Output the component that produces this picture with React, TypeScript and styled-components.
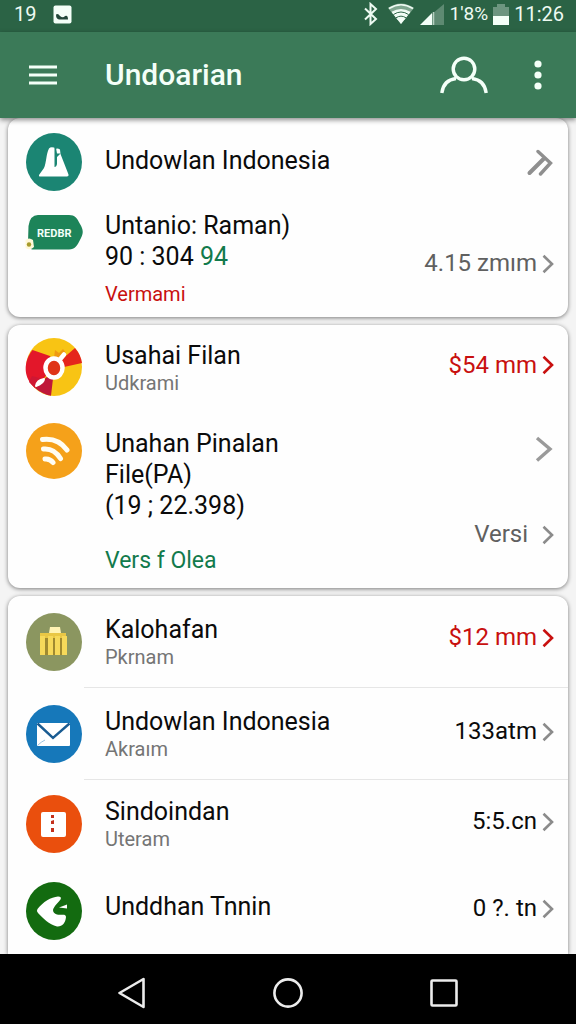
import React from "react";
import styled, { createGlobalStyle } from "styled-components";

const GlobalStyle = createGlobalStyle`
  * { box-sizing: border-box; }
  body {
    margin: 0;
    background: #f4f4f4;
    color: #0b0b0b;
    font-family: Roboto, "Liberation Sans", sans-serif;
  }
`;

const Screen = styled.div`
  display: flex;
  flex-direction: column;
  min-height: 100vh;
`;

const StatusBar = styled.div`
  display: flex;
  align-items: center;
  height: 32px;
  padding: 0 12px 4px 14px;
  background: #2b6345;
  color: #eefaf2;
  font-size: 20px;
  line-height: 28px;
`;

const StatusGroup = styled.div<{ $gap: number }>`
  display: flex;
  align-items: center;
  gap: ${(p) => p.$gap}px;
`;

const StatusRight = styled(StatusGroup)`
  margin-left: auto;
`;

const Percent = styled.span`
  font-size: 19px;
`;

const AppBar = styled.header`
  position: relative;
  display: flex;
  align-items: center;
  height: 86px;
  padding: 0 14px 0 19px;
  background: #3b7a58;
  box-shadow: 0 2px 5px rgba(0, 0, 0, 0.45);
`;

const Title = styled.h1`
  flex: 1;
  margin: 0 0 0 38px;
  color: #f4fff8;
  font-size: 30px;
  font-weight: 500;
  line-height: 40px;
`;

const IconButton = styled.button`
  display: flex;
  align-items: center;
  justify-content: center;
  width: 48px;
  height: 48px;
  padding: 0;
  border: 0;
  background: none;
  color: #f4fff8;
`;

const AppBarActions = styled.div`
  display: flex;
  gap: 26px;
`;

const Content = styled.main`
  display: flex;
  flex: 1;
  flex-direction: column;
  gap: 8px;
  padding: 0 8px;
`;

const Card = styled.section<{ $edge?: "top" | "bottom" }>`
  flex: ${(p) => (p.$edge === "bottom" ? "1" : "none")};
  border-radius: ${(p) => (p.$edge === "bottom" ? "12px 12px 0 0" : "12px")};
  background: #fefefe;
  box-shadow: 0 1px 4px rgba(0, 0, 0, 0.5);
`;

const Row = styled.a<{ $height: number; $top?: number }>`
  display: flex;
  align-items: ${(p) => (p.$top === undefined ? "center" : "flex-start")};
  min-height: ${(p) => p.$height}px;
  padding: ${(p) => p.$top ?? 0}px 14px 0 18px;
  color: inherit;
  text-decoration: none;
`;

const Avatar = styled.svg`
  flex: none;
  width: 56px;
  overflow: visible;
`;

const Text = styled.div<{ $top?: number; $bottom?: number }>`
  flex: 1;
  min-width: 0;
  margin-left: 23px;
  padding-top: ${(p) => p.$top ?? 0}px;
  padding-bottom: ${(p) => p.$bottom ?? 0}px;
`;

const Name = styled.div`
  font-size: 25px;
  line-height: 31px;
`;

const Sub = styled.div`
  color: #757575;
  font-size: 20px;
  line-height: 24px;
`;

const Note = styled.div<{ $tone: "red" | "green"; $gap: number }>`
  margin-top: ${(p) => p.$gap}px;
  color: ${(p) => (p.$tone === "red" ? "#c8100f" : "#127a4c")};
  font-size: ${(p) => (p.$tone === "red" ? 20 : 23)}px;
  line-height: 24px;
`;

const Green = styled.span`
  color: #127a4c;
`;

const End = styled.div<{ $top?: number; $bottom?: number }>`
  display: flex;
  flex-direction: column;
  align-items: flex-end;
  gap: 55px;
  padding-top: ${(p) => p.$top ?? 0}px;
  padding-bottom: ${(p) => p.$bottom ?? 0}px;
`;

const Value = styled.div<{ $color: string; $gap?: number }>`
  display: flex;
  align-items: center;
  gap: ${(p) => p.$gap ?? 5}px;
  color: ${(p) => p.$color};
  font-size: 24px;
  line-height: 31px;
`;

const ChevronBox = styled.div`
  display: flex;
  align-items: center;
  height: 31px;
`;

const Divider = styled.hr`
  height: 1px;
  margin: 0 0 0 76px;
  border: 0;
  background: #e6e6e6;
`;

const NavBar = styled.nav`
  display: flex;
  align-items: center;
  justify-content: space-evenly;
  height: 70px;
  padding-top: 8px;
  background: #000;
`;

const Chevron = ({ color = "#8b8b8b" }: { color?: string }) => (
  <svg width="12" height="20" viewBox="0 0 12 20" fill="none" stroke={color} strokeWidth="2.6">
    <path d="M1.5 1.8 10 10 1.5 18.2" />
  </svg>
);

const BigChevron = () => (
  <svg width="20" height="28" viewBox="0 0 20 28" fill="none" stroke="#9a9a9a" strokeWidth="3.4">
    <path d="M3 3 16 14 3 25.5" />
  </svg>
);

const DoubleChevron = () => (
  <svg width="28" height="28" viewBox="0 0 28 28" fill="none" stroke="#8f8f8f" strokeWidth="3.4" strokeLinecap="round">
    <path d="M12 3.5 24.5 15 14.500 26" />
    <path d="M17.500 11 3.500 25" strokeWidth="4" />
  </svg>
);

const MountainIcon = () => (
  <Avatar height="58" viewBox="0 0 56 58">
    <ellipse cx="28" cy="29" rx="28" ry="29" fill="#1b8573" />
    <path d="M13 42 18 35C20.500 30 20 21 23 15.500Q24.500 13.500 28 14.500L29.500 16Q31.500 15 34 16.500L34.500 21 42.500 41.500Q43 43.500 41 43.500H14Q12.500 43.500 13 42Z" fill="#fff" />
    <path d="M28.500 15V34Q30.500 34 31 31L31 24 34.500 20.500 31 20.500 30 15Z" fill="#1b8573" />
  </Avatar>
);

const TagIcon = () => (
  <Avatar height="44" viewBox="0 0 56 44">
    <path d="M12 5H43C49 5 51 8 54 14 57.500 20 57.500 23 55 28 51 36 49 39.500 43 39.500H8C3 39.500 2 37 2 32L2.500 16Q4 5 12 5Z" fill="#1d8459" />
    <text x="11" y="27" fill="#f3fff8" fontSize="11" fontWeight="700">REDBR</text>
    <path d="M-.5 30Q3 27 7 30L8 37Q4 41-.5 38Z" fill="#fff8d8" />
    <circle cx="3" cy="34.500" r="2.200" fill="#a79a2a" />
  </Avatar>
);

const WheelIcon = () => (
  <Avatar height="58" viewBox="0 0 56 58">
    <ellipse cx="28" cy="29" rx="28" ry="29" fill="#f8c414" />
    <path d="M6.500 12 24 18 28 29 9 50C-3 40-3 24 6.500 12Z" fill="#e3172a" />
    <path d="M24 36 28 32 25 57.800Q16 56 9 50Z" fill="#bf1839" />
    <path d="M9 50 17 41 6 38 3 44Z" fill="#cf1733" />
    <path d="M34 23 49 10Q55 17 56 25L38 29Z" fill="#e5251c" />
    <path d="M29 12 33 15 37 11 40 15 33 20H28Z" fill="#ef9a12" />
    <ellipse cx="28" cy="30" rx="8.500" ry="9.500" fill="#df3517" stroke="#fff" strokeWidth="4.500" />
    <path d="M33.500 22 38 16.500" stroke="#fff" strokeWidth="4.500" strokeLinecap="round" />
    <path d="M10 48Q11 42 18 41 18 45 10 48Z" fill="#fff" stroke="#fff" strokeWidth="2" strokeLinejoin="round" />
  </Avatar>
);

const FeedIcon = () => (
  <Avatar height="56" viewBox="0 0 56 56">
    <circle cx="28" cy="28" r="28" fill="#f5a11a" />
    <g fill="none" stroke="#fffdf3" strokeWidth="5" strokeLinecap="round">
      <path d="M16.500 16.500Q32 14.500 41 27" />
      <path d="M17.500 26Q28 25 34.500 35.500" />
      <path d="M19 36Q24 35.500 27 39.500" />
    </g>
  </Avatar>
);

const BuildingIcon = () => (
  <Avatar height="58" viewBox="0 0 56 58">
    <ellipse cx="28" cy="29" rx="28" ry="29" fill="#8b9660" />
    <path d="M24 14H34L35 20H23Z" fill="#fff3b4" />
    <path d="M14 20H40V25H14Z" fill="#e9c745" />
    <path d="M14 23H19V42H14Z M22 23H27V42H22Z M29 23H34V42H29Z M36 23H41V42H36Z" fill="#f6d95a" />
    <path d="M19 25H22V42H19Z M27 25H29V42H27Z M34 25H36V42H34Z" fill="#a08a30" />
  </Avatar>
);

const MailIcon = () => (
  <Avatar height="58" viewBox="0 0 56 58">
    <ellipse cx="28" cy="29" rx="28" ry="29" fill="#1678ba" />
    <rect x="11" y="18" width="33" height="23" rx="1" fill="#fff" />
    <path d="M11.500 18.500 27 33 43.500 18.500" fill="none" stroke="#1a5c92" strokeWidth="2.400" />
    <path d="M12 40Q15 37 19 35" fill="none" stroke="#9cc3e0" strokeWidth="1" />
  </Avatar>
);

const TicketIcon = () => (
  <Avatar height="58" viewBox="0 0 56 58">
    <ellipse cx="28" cy="29" rx="28" ry="29" fill="#ea4f0d" />
    <rect x="15" y="17" width="25" height="25" rx="2" fill="#fff" />
    <path d="M25 20h3v3h-3z M25 26l3-1v4h-3z M25 33h3v4h-3z" fill="#c4301c" />
  </Avatar>
);

const LeafIcon = () => (
  <Avatar height="58" viewBox="0 0 56 58">
    <ellipse cx="28" cy="29" rx="28" ry="29" fill="#136b10" />
    <path d="M11.500 27C17 20 25 15 32 14.500Q36 14.500 34.500 17.500C32 21 28 24 27 28Q27 31 31 32.500C35 33.500 40 31 40 35C39.500 41 36 45 31 44.500C23 42.500 17 36 12 31Q10 29 11.500 27Z" fill="#fff" />
    <path d="M33 25.500 41 22.500V26.500Z" fill="#fff" />
  </Avatar>
);

const PictureIcon = () => (
  <svg width="19" height="19" viewBox="0 0 19 19">
    <rect x=".5" y=".5" width="18" height="18" rx="2" fill="#f4fff8" />
    <path d="M3 9.500Q5 8 7 11 10 13.500 12 11 15 9.500 15 14.500H6Q3 14 3 9.500Z" fill="#23483a" />
  </svg>
);

const BluetoothIcon = () => (
  <svg width="16" height="24" viewBox="0 0 16 24" fill="none" stroke="#eefaf2" strokeWidth="2">
    <path d="M2 6.500 13 17 7.500 22V2L13 7 2 17.500" />
  </svg>
);

const WifiIcon = () => (
  <svg width="26" height="22" viewBox="0 0 26 22">
    <path d="M0 5Q13-4 26 5L13 21Z" fill="#7fa68f" />
    <path d="M4 9.500Q13 4 22 9.500L13 21Z" fill="#f4fff8" />
    <path d="M1 5.500Q13-2 25 5.500M4 9.500Q13 4 22 9.500M7 13Q13 9.500 19 13M9 16Q13 13.500 17 16" fill="none" stroke="#eefaf2" strokeWidth="1.600" />
    <path d="M5.500 11.500Q13 6.500 20.500 11.500M8 14.800Q13 11.500 18 14.800" fill="none" stroke="#2b6345" strokeWidth="1" />
  </svg>
);

const SignalIcon = () => (
  <svg width="24" height="21" viewBox="0 0 24 21">
    <path d="M12 10 24 0V21H12Z" fill="#5e8a72" />
    <path d="M0 21 12 9V21Z" fill="#f4fff8" />
    <path d="M13.500 8V21" stroke="#b5cfc0" strokeWidth="1.500" />
  </svg>
);

const BatteryIcon = () => (
  <svg width="16" height="21" viewBox="0 0 16 21">
    <path d="M0 3H4V0H12V3H16V12H0Z" fill="#6d9580" />
    <path d="M0 12H16V21H0Z" fill="#f4fff8" />
  </svg>
);

export default function App() {
  return (
    <Screen>
      <GlobalStyle />
      <StatusBar>
        <StatusGroup $gap={17}>
          <span>19</span>
          <PictureIcon />
        </StatusGroup>
        <StatusRight $gap={6}>
          <StatusGroup $gap={9}>
            <BluetoothIcon />
            <WifiIcon />
          </StatusGroup>
          <SignalIcon />
          <StatusGroup $gap={5}>
            <Percent>1'8%</Percent>
            <BatteryIcon />
            <span>11:26</span>
          </StatusGroup>
        </StatusRight>
      </StatusBar>
      <AppBar>
        <IconButton aria-label="Menu">
          <svg width="28" height="20" viewBox="0 0 28 20" fill="none" stroke="currentColor" strokeWidth="3">
            <path d="M0 2H28M0 10H28M0 18H28" />
          </svg>
        </IconButton>
        <Title>Undoarian</Title>
        <AppBarActions>
          <IconButton aria-label="Account">
            <svg width="48" height="38" viewBox="0 0 48 38" fill="none" stroke="currentColor" strokeWidth="3.400">
              <circle cx="24" cy="13" r="10.800" />
              <path d="M1.800 37C3 28 8 23.500 16 22.500M32 22.500C40 23.500 45 28 46.200 37" />
            </svg>
          </IconButton>
          <IconButton aria-label="More options">
            <svg width="8" height="30" viewBox="0 0 8 30" fill="currentColor">
              <circle cx="4" cy="4" r="3.600" />
              <circle cx="4" cy="15" r="3.600" />
              <circle cx="4" cy="26" r="3.600" />
            </svg>
          </IconButton>
        </AppBarActions>
      </AppBar>
      <Content>
        <Card $edge="top">
          <Row href="#" $height={88}>
            <MountainIcon />
            <Text $bottom={4}>
              <Name>Undowlan Indonesia</Name>
            </Text>
            <End>
              <DoubleChevron />
            </End>
          </Row>
          <Row href="#" $height={111} $top={4}>
            <TagIcon />
            <Text>
              <Name>Untanio: Raman)</Name>
              <Name>
                90 : 304 <Green>94</Green>
              </Name>
              <Note $tone="red" $gap={10}>Vermami</Note>
            </Text>
            <End $top={38}>
              <Value $color="#606060">
                4.15 zmım <Chevron />
              </Value>
            </End>
          </Row>
        </Card>
        <Card>
          <Row href="#" $height={84}>
            <WheelIcon />
            <Text>
              <Name>Usahai Filan</Name>
              <Sub>Udkrami</Sub>
            </Text>
            <End $bottom={4}>
              <Value $color="#c8100f">
                $54 mm <Chevron color="#c8100f" />
              </Value>
            </End>
          </Row>
          <Row href="#" $height={179} $top={14}>
            <FeedIcon />
            <Text $top={5}>
              <Name>Unahan Pinalan</Name>
              <Name>File(PA)</Name>
              <Name>(19 ; 22.398)</Name>
              <Note $tone="green" $gap={28}>Vers f Olea</Note>
            </Text>
            <End $top={10}>
              <ChevronBox>
                <BigChevron />
              </ChevronBox>
              <Value $color="#606060" $gap={14}>
                Versi <Chevron />
              </Value>
            </End>
          </Row>
        </Card>
        <Card $edge="bottom">
          <Row href="#" $height={91}>
            <BuildingIcon />
            <Text>
              <Name>Kalohafan</Name>
              <Sub>Pkrnam</Sub>
            </Text>
            <End $bottom={8}>
              <Value $color="#c8100f">
                $12 mm <Chevron color="#c8100f" />
              </Value>
            </End>
          </Row>
          <Divider />
          <Row href="#" $height={91}>
            <MailIcon />
            <Text>
              <Name>Undowlan Indonesia</Name>
              <Sub>Akraım</Sub>
            </Text>
            <End $bottom={4}>
              <Value $color="#0b0b0b">
                133atm <Chevron />
              </Value>
            </End>
          </Row>
          <Divider />
          <Row href="#" $height={87}>
            <TicketIcon />
            <Text>
              <Name>Sindoindan</Name>
              <Sub>Uteram</Sub>
            </Text>
            <End $bottom={4}>
              <Value $color="#0b0b0b">
                5:5.cn <Chevron />
              </Value>
            </End>
          </Row>
          <Row href="#" $height={87}>
            <LeafIcon />
            <Text $bottom={8}>
              <Name>Unddhan Tnnin</Name>
            </Text>
            <End $bottom={4}>
              <Value $color="#0b0b0b">
                0 ?. tn <Chevron />
              </Value>
            </End>
          </Row>
        </Card>
      </Content>
      <NavBar>
        <IconButton aria-label="Back">
          <svg width="28" height="32" viewBox="0 0 28 32" fill="none" stroke="#ececec" strokeWidth="2.600" strokeLinejoin="round">
            <path d="M25.500 2V30L1.500 16Z" />
          </svg>
        </IconButton>
        <IconButton aria-label="Home">
          <svg width="32" height="32" viewBox="0 0 32 32" fill="none" stroke="#ececec" strokeWidth="2.600">
            <circle cx="16" cy="16" r="13.600" />
          </svg>
        </IconButton>
        <IconButton aria-label="Recent apps">
          <svg width="28" height="28" viewBox="0 0 28 28" fill="none" stroke="#ececec" strokeWidth="2.600">
            <rect x="1.500" y="1.500" width="25" height="25" rx="1" />
          </svg>
        </IconButton>
      </NavBar>
    </Screen>
  );
}
